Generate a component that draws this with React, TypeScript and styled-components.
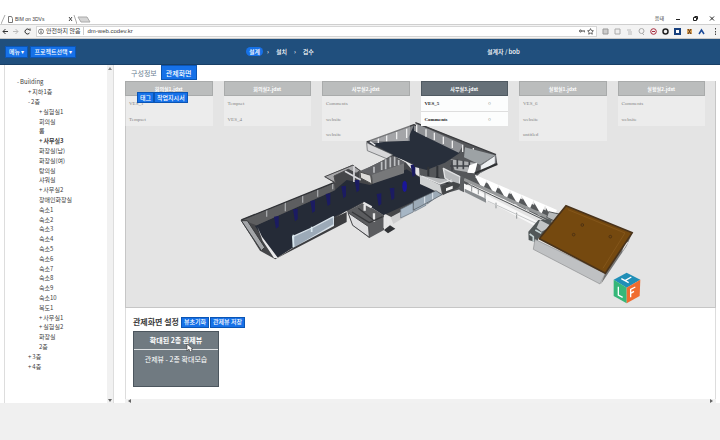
import React from 'react';
import styled, { createGlobalStyle, css } from 'styled-components';

const GlobalStyle = createGlobalStyle`
  * { box-sizing: border-box; }
  html { height: 100%; }
  body {
    margin: 0;
    min-height: 100%;
    background: #f0f0f0;
    color: #3c3c3c;
    font-family: "Noto Sans CJK KR", "Liberation Sans", sans-serif;
    font-size: 6px;
    line-height: 10px;
  }
  button, input { font: inherit; color: inherit; margin: 0; padding: 0; border: 0; background: none; }
  button { cursor: pointer; white-space: nowrap; }
  ul { list-style: none; margin: 0; padding: 0; }
  h1, h2, h3 { margin: 0; font: inherit; }
  a { color: inherit; text-decoration: none; }
`;

const Page = styled.div`
  min-height: 100vh;
  display: flex;
  flex-direction: column;
  padding-bottom: 37px;
`;

/* Browser chrome */
const TabStrip = styled.div`
  display: flex;
  align-items: flex-end;
  height: 25px;
  padding-left: 1px;
  background: #fff;
  border-bottom: 1px solid #cfcfcf;
`;
const BrowserTab = styled.div`
  display: flex;
  align-items: center;
  gap: 2px;
  width: 76px;
  height: 10px;
  svg { flex: none; }
  span { flex: 1; white-space: nowrap; font-family: "Liberation Sans", sans-serif; font-size: 5px; }
`;
const WindowButtons = styled.div`
  display: flex;
  align-items: center;
  gap: 11px;
  margin-left: auto;
  padding-right: 5px;
  height: 12px;
  font-size: 5px;
  button { display: flex; }
`;
const AddressRow = styled.div`
  display: flex;
  align-items: center;
  gap: 5px;
  height: 14px;
  padding: 0 3px 1px 2px;
  background: #f3f3f3;
  border-bottom: 1px solid #c9c9c9;
  button { display: flex; }
`;
const AddressBox = styled.label`
  flex: 1;
  display: flex;
  align-items: center;
  gap: 2px;
  height: 11px;
  padding: 0 2px 0 1px;
  background: #fff;
  border: 1px solid #d6d6d6;
  span { white-space: nowrap; padding-right: 3px; border-right: 1px solid #ccc; line-height: 8px; }
  input {
    flex: 1;
    min-width: 0;
    outline: 0;
    height: 9px;
    padding-left: 1px;
    font-family: "Liberation Sans", sans-serif;
  }
`;
const Extensions = styled.div`
  display: flex;
  gap: 5px;
  svg { display: block; }
`;

/* Application header */
const Header = styled.header`
  display: grid;
  grid-template-columns: 246px 1fr 233px;
  align-items: center;
  height: 26px;
  background: #204f7d;
  border-bottom: 1px solid #183f66;
  color: #fff;
`;
const MenuGroup = styled.div`
  display: flex;
  gap: 2px;
  padding-left: 5px;
`;
const BlueButton = styled.button<{ $height?: number; $pad?: number }>`
  height: ${p => p.$height ?? 12}px;
  padding: 0 ${p => p.$pad ?? 3}px;
  border: 1px solid #0b55b4;
  background: #1671e8;
  color: #fff;
  line-height: 8px;
  font-weight: 500;
`;
const Steps = styled.nav`
  display: flex;
  align-items: center;
  gap: 4px;
  font-weight: 500;
`;
const Step = styled.a<{ $current?: boolean }>`
  line-height: 9px;
  padding: 0 3px;
  border-radius: 5px;
  ${p => p.$current && css`background: #1671e8;`}
`;
const User = styled.div`
  font-weight: 500;
`;

/* Workspace */
const Workspace = styled.div`
  flex: 1;
  display: grid;
  grid-template-columns: 110px 1fr;
  gap: 11px;
  padding: 0 4px;
  background: #fff;
`;
const Sidebar = styled.aside`
  display: flex;
  border-left: 1px solid #ddd;
  border-right: 1px solid #ddd;
`;
const Tree = styled.ul`
  flex: 1;
  display: flex;
  flex-direction: column;
  padding: 12px 0 32px 12px;
`;
const TreeItem = styled.li<{ $depth: number; $bold?: boolean }>`
  flex: 1;
  display: flex;
  align-items: center;
  gap: 1px;
  line-height: 9px;
  padding-left: ${p => p.$depth * 11}px;
  font-weight: ${p => (p.$bold ? 700 : 400)};
  white-space: nowrap;
  button { line-height: 9px; }
`;
const VScroll = styled.div`
  width: 6px;
  display: flex;
  flex-direction: column;
  justify-content: space-between;
  align-items: center;
  padding: 2px 0 1px;
  background: #f1f1f1;
`;
const Main = styled.main`
  display: flex;
  flex-direction: column;
  min-width: 0;
`;
const Tabs = styled.div`
  display: flex;
  height: 16px;
  padding-left: 6px;
  gap: 4px;
  font-size: 7px;
  align-items: flex-start;
`;
const PlainTab = styled.button`
  height: 15px;
  font-size: 7px;
  color: #6b7f92;
`;
const Scene = styled.section`
  position: relative;
  border: 1px solid #c6c6c6;
  border-top: 0;
  background: #e4e4e4;
`;
const Model = styled.svg`
  display: block;
  width: 100%;
  height: auto;
`;
const Cards = styled.div`
  position: absolute;
  inset: 0 10px auto -1px;
  display: grid;
  grid-template-columns: repeat(6, 1fr);
  gap: 11px;
  align-items: start;
`;
const Card = styled.article<{ $active?: boolean }>`
  background: ${p => (p.$active ? '#fcfdfd' : 'rgba(255, 255, 255, 0.3)')};
  color: ${p => (p.$active ? '#222' : '#858585')};
  font-family: "Liberation Serif", serif;
  font-size: 5px;
  font-weight: ${p => (p.$active ? 700 : 400)};
  h3 {
    height: 15px;
    line-height: 13px;
    text-align: center;
    font-family: "Noto Sans CJK KR", sans-serif;
    font-weight: 700;
    font-size: 5px;
    color: #fff;
    background: ${p => (p.$active ? '#667078' : '#bbbdbd')};
    border: 1px solid ${p => (p.$active ? '#505a62' : '#a9abab')};
  }
  li {
    display: flex;
    justify-content: space-between;
    height: 15px;
    line-height: 15px;
    padding: 0 17px 0 4px;
  }
  li + li { border-top: 1px solid ${p => (p.$active ? '#dedede' : 'transparent')}; }
`;
const SceneActions = styled.div`
  position: absolute;
  left: 11px;
  top: 11px;
  display: flex;
`;
const Settings = styled.section`
  flex: 1;
  padding: 8px 7px;
  border: solid #ddd;
  border-width: 0 1px;
`;
const SettingsHead = styled.div`
  display: flex;
  align-items: center;
  gap: 1px;
  height: 12px;
  h2 { font-size: 8px; font-weight: 700; white-space: nowrap; padding-right: 1px; }
`;
const ViewCard = styled.button`
  display: block;
  width: 86px;
  margin-top: 3px;
  border: 1px solid #4c565e;
  background: #707a81;
  color: #fff;
  font-size: 7px;
  text-align: center;
  strong { display: block; font-weight: 700; line-height: 17px; border-bottom: 1px solid #dfe2e4; }
  span { display: block; height: 36px; padding-top: 4px; }
`;
const Pointer = styled.svg`
  position: absolute;
  left: 53px;
  top: 28px;
`;
const PointerAnchor = styled.div`
  position: relative;
`;
const HScroll = styled.div`
  display: flex;
  justify-content: space-between;
  align-items: center;
  height: 4px;
  padding: 0 3px;
  background: #f1f1f1;
`;

type Node = { name: string; depth: number; mark?: string; bold?: boolean };
const rooms = ['숙소1', '숙소2', '숙소3', '숙소4', '숙소5', '숙소6', '숙소7', '숙소8', '숙소9', '숙소10', '복도1'];
const tree: Node[] = [
  { name: 'Building', depth: 0, mark: '-' },
  { name: '지하1층', depth: 1, mark: '+' },
  { name: '2층', depth: 1, mark: '-' },
  { name: '실험실1', depth: 2, mark: '+' },
  { name: '회의실', depth: 2 },
  { name: '룸', depth: 2 },
  { name: '사무실3', depth: 2, mark: '+', bold: true },
  { name: '화장실(남)', depth: 2 },
  { name: '화장실(여)', depth: 2 },
  { name: '탕의실', depth: 2 },
  { name: '샤워실', depth: 2 },
  { name: '사무실2', depth: 2, mark: '+' },
  { name: '장애인화장실', depth: 2 },
  ...rooms.map(name => ({ name, depth: 2 })),
  { name: '사무실1', depth: 2, mark: '+' },
  { name: '실험실2', depth: 2, mark: '+' },
  { name: '화장실', depth: 2 },
  { name: '2층', depth: 2 },
  { name: '3층', depth: 1, mark: '+' },
  { name: '4층', depth: 1, mark: '+' },
];

const cards = [
  { title: '회의실1.jdxt', rows: ['VES_1', 'Tempset'] },
  { title: '회의실2.jdxt', rows: ['Tempset', 'VES_4'] },
  { title: '사무실2.jdxt', rows: ['Comments', 'website', 'website'] },
  { title: '사무실3.jdxt', rows: ['VES_5', 'Comments'], active: true },
  { title: '실험실1.jdxt', rows: ['VES_6', 'website', 'untitled'] },
  { title: '실험실2.jdxt', rows: ['Comments', 'website'] },
];

function Wing() {
  const pillars = [[140, 307], [197, 285], [249, 260], [295, 239], [342, 216], [382, 198], [448, 239], [487, 222], [550, 152]];
  return (
    <g transform="translate(230 120) scale(.3333)" strokeLinejoin="round">
      <path d="M410 66 552 14 690 75 720 110 650 160 550 135 490 105 430 80Z" fill="#343941" />
      <path d="M418 70 552 26 690 92 645 145 580 140 488 108 452 82Z" fill="#282f3b" />
      <path d="M412 66 552 15 536 52 536 62 462 66 437 70Z" fill="#7d7f83" />
      <path d="M552 15 700 84 696 100 552 36Z" fill="#8a8c90" />
      <path d="M410 68 488 104 470 116 412 92Z" fill="#d7d7d9" stroke="#55575b" strokeWidth="2" />
      <path d="M420 65 436 76M445 55v14M470 46v18M500 36v22M530 26v28M560 20v20M585 30v22M610 42v22M637 54v22M663 67v22" stroke="#e8e8ea" strokeWidth="4" />
      <path d="M410 66 552 14 700 80" fill="none" stroke="#3b3c3f" strokeWidth="4" />

      <path d="M32 300 312 188 284 170 368 134 395 154 488 106 528 128 560 165 636 208 612 230 485 292 400 248 350 276 352 270 136 418 90 392Z" fill="#454649" />
      <path d="M75 318 312 212 350 180 420 195 530 148 626 210 460 286 400 246 355 270 310 292 188 352 190 382 138 414Z" fill="#252b37" />
      <path d="M35 300 312 190 316 210 80 316Z" fill="#5d5e60" />
      <path d="M284 170 368 136 390 152 378 160 355 148 312 168 316 188Z" fill="#a8a8aa" stroke="#4a4a4c" strokeWidth="3" />
      <path d="M345 154 392 180 M372 138v48M392 155v20" stroke="#d9d9dc" strokeWidth="5" />
      <path d="M388 154 420 140 488 108 528 128 426 165 424 190 390 172Z" fill="#616266" />
      <path d="M390 156 422 166 426 192 392 174Z" fill="#dcdbd9" stroke="#4b4b4b" strokeWidth="3" />
      <path d="M426 164 522 130v30l-94 31Z" fill="#77787a" />
      <path d="M432 140v18M455 125v25M467 118v30M481 112v30M494 110v28M506 120v16" stroke="#bdbfc2" strokeWidth="5" />
      <path d="M34 302 52 302 104 382 94 392Z" fill="#a3a5a8" stroke="#393b3d" strokeWidth="3" />
      <path d="M82 320 96 350 144 414 132 414 98 362Z" fill="#e9e9eb" />
      <path d="M110 268v22M166 246v28M218 226v22M263 208v22M308 190v18" stroke="#a5a7aa" strokeWidth="4" />
      <path d="M34 300 312 188" stroke="#303236" strokeWidth="4" />
      <path d="M188 350 245 324 310 290 312 314 192 384Z" fill="#9caab8" stroke="#d8e2ea" strokeWidth="4" />
      <path d="M245 320v16M190 344v38" stroke="#d8e7ee" strokeWidth="5" />
      <path d="M138 416 350 306 350 276 312 294 312 318 192 382Z" fill="#3c3d40" />
      <path d="M352 274 400 248 462 286 462 330 418 354 368 316Z" fill="#5b5c5f" />
      <path d="M354 278 416 320 418 352 368 316Z" fill="#dedee0" stroke="#47484b" strokeWidth="3" />
      <path d="M400 248 425 262M432 280v25M404 254v18M464 292v32M475 292v32" stroke="#e7e7e8" strokeWidth="7" />
      <path d="M366 276 418 308 458 290M385 265 430 300" fill="none" stroke="#37383b" strokeWidth="4" />
      <path d="M482 292 622 216 636 222 490 312Z" fill="#cfcfd0" />
      <path d="M512 268 550 248v28l-38 18ZM554 246 588 230v26l-34 18ZM592 228 620 214 626 226 592 252Z" fill="#a6b6c5" stroke="#66717c" strokeWidth="2" />
      <path d="M462 330 480 316 496 326 474 340Z" fill="#303236" />
      {pillars.map(([x, y]) => (
        <path key={x} d={`M${x - 8} ${y - 17}l14-2v32l-8 6Z`} fill="#1b1b62" />
      ))}
      <ellipse cx="524" cy="199" rx="7" ry="17" fill="#1a169a" />
    </g>
  );
}

function Corridor() {
  const teeth = [0, 1, 2, 3, 4, 5, 6];
  return (
    <g transform="translate(420 120) scale(.3333)" strokeLinejoin="round">
      <path d="M-10 8 228 104 232 132 180 160 130 205 60 225 0 185-6 100Z" fill="#55575a" />
      <path d="M-18 32 0 40 120 98 75 128 20 150-18 140Z" fill="#282f3b" />
      <path d="M-12 10 130 74 116 98-12 36Z" fill="#909296" />
      <path d="M-10 14v22M18 28v22M43 38v22M70 50v22M97 62v22M128 74v22M160 84v22" stroke="#eee" strokeWidth="4" />
      <path d="M-14 8 228 104" stroke="#3b3c3f" strokeWidth="4" />
      <path d="M135 82 226 106 180 134 132 112Z" fill="#9da2a5" />
      <path d="M182 136 226 106v24l-46 28Z" fill="#edf0f2" stroke="#76797d" strokeWidth="3" />
      <path d="M92 118 172 130 164 160 104 150Z" fill="#aeb0b2" />
      <path d="M96 120v32M112 118v28M130 122v26M148 125v30M90 138h70" stroke="#414449" strokeWidth="5" />
      <path d="M148 136 172 128 164 160 142 158Z" fill="#fff" />
      <path d="M164 160 232 132" stroke="#2f3133" strokeWidth="6" />
      <path d="M0 165 60 195 66 222 0 192Z" fill="#d0d2d3" />
      <path d="M25 140v28M52 138v32M76 150 120 170M48 170 92 196" stroke="#303337" strokeWidth="6" />
      <path d="M70 145 120 170 118 200 75 174ZM5 168 60 192 95 180" fill="#b8babc" stroke="#e2e3e4" strokeWidth="4" />
      <path d="M64 198 100 185 130 195 68 226Z" fill="#444648" />
      <path d="M78 205 98 197v9l-20 8Z" fill="#f2f2f2" />
      <path d="M-20 244 48 212 66 224 0 260-20 270Z" fill="#9caab7" stroke="#50565c" strokeWidth="2" />
      <path d="M14 230v20M38 218v20" stroke="#dfe6ec" strokeWidth="3" />

      <path d="M128 188 352 304 405 308 405 320 358 325 345 318 225 255 134 214Z" fill="#f8f8f8" />
      <path d="M128 175 165 172 405 284 390 305Z" fill="#55585a" />
      {teeth.map(i => (
        <path key={i} d={`M${165 + i * 35} ${164 + i * 15}l36 16-14 32-8-2Z`} fill="#fff" />
      ))}
      {teeth.map(i => (
        <path key={i} d={`M${168 + i * 35} ${174 + i * 15}l16 27-18-6Z`} fill="#56585a" />
      ))}
      <path d="M132 178 400 300" stroke="#969899" strokeWidth="9" />
      <path d="M132 186 385 306" stroke="#505355" strokeWidth="3" />
      <path d="M134 206 198 236v12l-64-32Z" fill="#888c8f" />
      <path d="M155 195v20M175 205v18M195 215v20M228 248v17M290 278v18" stroke="#909395" strokeWidth="3" />
      <path d="M122 166 132 172v45l-14-7Z" fill="#5a5d60" />
      <path d="M203 243 348 310" stroke="#c5c7c8" strokeWidth="3" />
      <path d="M325 335 355 300 395 298 395 330 355 355 352 368 326 360Z" fill="#515758" />
      <path d="M360 300 395 318 365 335 350 323Z" fill="#c2c5c6" />
      <path d="M329 342 340 350v15M346 330l18 10" stroke="#c4d2d3" strokeWidth="5" fill="none" />
      <path d="M386 275 430 285 408 305 380 292Z" fill="#b7babb" stroke="#545759" strokeWidth="3" />

      <path d="M345 358 556 460 540 492 340 388Z" fill="#bfc1c3" stroke="#8c8e90" strokeWidth="2" />
      <path d="M637 338 620 378 543 492 556 459Z" fill="#747474" />
      <path d="M626 365 606 397 614 370Z" fill="#e1e1e1" />
      <path d="M438 257 637 338 556 460 358 356Z" fill="#75490f" stroke="#49331b" strokeWidth="5" />
      <path d="M444 269 615 339 549 445" fill="none" stroke="#8b5c20" strokeWidth="2" />
      <g fill="#75490f" stroke="#4e3213" strokeWidth="3">
        <circle cx="487" cy="315" r="4" /><circle cx="461" cy="344" r="4" /><circle cx="571" cy="350" r="4" />
      </g>
    </g>
  );
}

function ViewCube() {
  return (
    <g transform="translate(560 260) scale(.3333)">
      <path d="M200 38 241 59 200 83 161 59Z" fill="#208fb7" />
      <path d="M161 59 200 83v47l-39-22Z" fill="#36b779" />
      <path d="M241 59 200 83v47l39-22Z" fill="#f06c30" />
      <path d="M184 56 206 68M195 62 214 51" stroke="#fff" strokeWidth="4" />
      <path d="M175 80v25l13 7M212 112V88l14-7M212 100l10-6" fill="none" stroke="#fff" strokeWidth="4" />
    </g>
  );
}

function Chrome() {
  return (
    <>
      <TabStrip>
        <BrowserTab>
          <svg width="12" height="10" fill="none" stroke="#777"><path d="M0 10 4 1" stroke="#aaa" /><path d="M7.500 2.500h3l1 2v4h-4Z" /></svg>
          <span>BIM on 3DVs</span>
          <svg width="9" height="10" fill="none" stroke="#444"><path d="m1 3 3 4M4 3 1 7" /><path d="m6 1 3 9" stroke="#aaa" /></svg>
        </BrowserTab>
        <svg width="14" height="10"><path d="M1 3h9l3 5H4Z" fill="#d5d5d5" stroke="#aaa" /></svg>
        <WindowButtons>
          <span>음태</span>
          <button aria-label="최소화"><svg width="6" height="7" stroke="#222"><path d="M1 4.500h4" /></svg></button>
          <button aria-label="창 크기"><svg width="6" height="7" fill="none" stroke="#222"><path d="M1.500 2.500h3v3h-3ZM2.500 1.500h3v3" /></svg></button>
          <button aria-label="닫기"><svg width="6" height="7" stroke="#222"><path d="m1 1.500 4 4M5 1.500l-4 4" /></svg></button>
        </WindowButtons>
      </TabStrip>
      <AddressRow>
        <button aria-label="뒤로"><svg width="6" height="7" fill="none" stroke="#333"><path d="M6 3.500H1M3.500 1 1 3.500 3.500 6" /></svg></button>
        <button aria-label="앞으로"><svg width="6" height="7" fill="none" stroke="#bbb"><path d="M0 3.500h5M2.500 1 5 3.500 2.500 6" /></svg></button>
        <button aria-label="새로고침"><svg width="7" height="7" fill="none" stroke="#333"><path d="M5.500 5A2.500 2.500 0 1 1 5 1.500L6 2.500V.5" /></svg></button>
        <AddressBox>
          <svg width="6" height="7" fill="none" stroke="#555"><circle cx="3" cy="3.500" r="2.500" strokeWidth=".7" /><path d="M3 3v2M3 1.500v1" /></svg>
          <span>안전하지 않음</span>
          <input aria-label="주소" defaultValue="dm-web.codev.kr" />
          <svg width="6" height="6" fill="none" stroke="#444"><circle cx="1.500" cy="3" r="1" /><path d="M3 3h3v1.500" /></svg>
          <svg width="7" height="7" fill="none" stroke="#444" strokeWidth=".8"><path d="m3.500.6.9 1.900 2 .3-1.500 1.400.4 2-1.800-1-1.800 1 .4-2L.6 2.800l2-.3Z" /></svg>
        </AddressBox>
        <Extensions>
          <svg width="7" height="7"><path d="M1 1h5v5H1Z" fill="#ccc" stroke="#999" /></svg>
          <svg width="7" height="7"><path d="M1 1h5v5H1Z" fill="#eee" stroke="#aaa" /></svg>
          <svg width="7" height="7" fill="none" stroke="#bbb"><path d="M1 2h4M2 4h4M2 6h4" /></svg>
          <svg width="7" height="7" fill="none" stroke="#aaa"><circle cx="3.500" cy="3" r="2.500" /><path d="m4 5 2 2" /></svg>
          <svg width="7" height="7" fill="none" stroke="#a5273b"><circle cx="3.500" cy="3.500" r="2.800" /><path d="M2 3.500h3" /></svg>
          <svg width="7" height="7" fill="none" stroke="#222"><circle cx="3.500" cy="3.500" r="2.500" strokeWidth="1.500" /></svg>
          <svg width="7" height="7"><path d="M1 1h5v5H1Z" fill="#fff" stroke="#17407e" strokeWidth="2" /></svg>
          <svg width="7" height="7"><path d="M1 1h5v5H1Z" fill="#d9a45d" /><path d="m2 1 3 5M5 1 2 6" stroke="#5f3512" /></svg>
          <svg width="7" height="7" fill="none" stroke="#1b4b9a" strokeWidth="1.500"><path d="m1 6 2.500-4L6 6" /></svg>
          <svg width="7" height="7" fill="#444"><path d="M5 0h1v1.500H5ZM5 3h1v1.500H5ZM5 5.500h1V7H5Z" /></svg>
        </Extensions>
      </AddressRow>
    </>
  );
}

export default function App() {
  return (
    <Page>
      <GlobalStyle />
      <Chrome />
      <Header>
        <MenuGroup>
          <BlueButton>메뉴 ▾</BlueButton>
          <BlueButton>프로젝트선택 ▾</BlueButton>
        </MenuGroup>
        <Steps>
          <Step href="#design" $current>설계</Step>
          <span>›</span>
          <Step href="#install">설치</Step>
          <span>›</span>
          <Step href="#inspect">검수</Step>
        </Steps>
        <User>설계자 / bob</User>
      </Header>
      <Workspace>
        <Sidebar>
          <Tree>
            {tree.map((n, i) => (
              <TreeItem key={i} $depth={n.depth} $bold={n.bold}>
                {n.mark && <button aria-label={`${n.name} 펼치기`}>{n.mark}</button>}
                <span>{n.name}</span>
              </TreeItem>
            ))}
          </Tree>
          <VScroll>
            <svg width="4" height="3"><path d="M0 3 2 0l2 3Z" fill="#888" /></svg>
            <svg width="4" height="3"><path d="M0 0h4L2 3Z" fill="#666" /></svg>
          </VScroll>
        </Sidebar>
        <Main>
          <Tabs>
            <PlainTab>구성정보</PlainTab>
            <BlueButton $height={15} $pad={4}>관제화면</BlueButton>
          </Tabs>
          <Scene>
            <Model viewBox="126 81 589 226" role="img" aria-label="2층 모델">
              <Wing />
              <Corridor />
              <ViewCube />
            </Model>
            <Cards>
              {cards.map(c => (
                <Card key={c.title} $active={c.active}>
                  <h3>{c.title}</h3>
                  <ul>
                    {c.rows.map((r, i) => (
                      <li key={i}><span>{r}</span>{c.active && <span>○</span>}</li>
                    ))}
                  </ul>
                </Card>
              ))}
            </Cards>
            <SceneActions>
              <BlueButton $height={11} $pad={2}>태그</BlueButton>
              <BlueButton $height={11} $pad={2}>작업지시서</BlueButton>
            </SceneActions>
          </Scene>
          <Settings>
            <PointerAnchor>
              <SettingsHead>
                <h2>관제화면 설정</h2>
                <BlueButton $height={11} $pad={2}>뷰초기화</BlueButton>
                <BlueButton $height={11} $pad={2}>관제뷰 저장</BlueButton>
              </SettingsHead>
              <ViewCard>
                <strong>확대된 2층 관제뷰</strong>
                <span>관제뷰 - 2층 확대모습</span>
              </ViewCard>
              <Pointer width="8" height="8" viewBox="0 0 8 8">
                <path d="M1 0v7l2-2 1 3 2-1-1-2h2Z" fill="#fff" stroke="#333" strokeWidth=".6" />
              </Pointer>
            </PointerAnchor>
          </Settings>
          <HScroll>
            <svg width="3" height="4"><path d="M3 0v4L0 2Z" fill="#666" /></svg>
            <svg width="3" height="4"><path d="M0 0v4l3-2Z" fill="#666" /></svg>
          </HScroll>
        </Main>
      </Workspace>
    </Page>
  );
}
